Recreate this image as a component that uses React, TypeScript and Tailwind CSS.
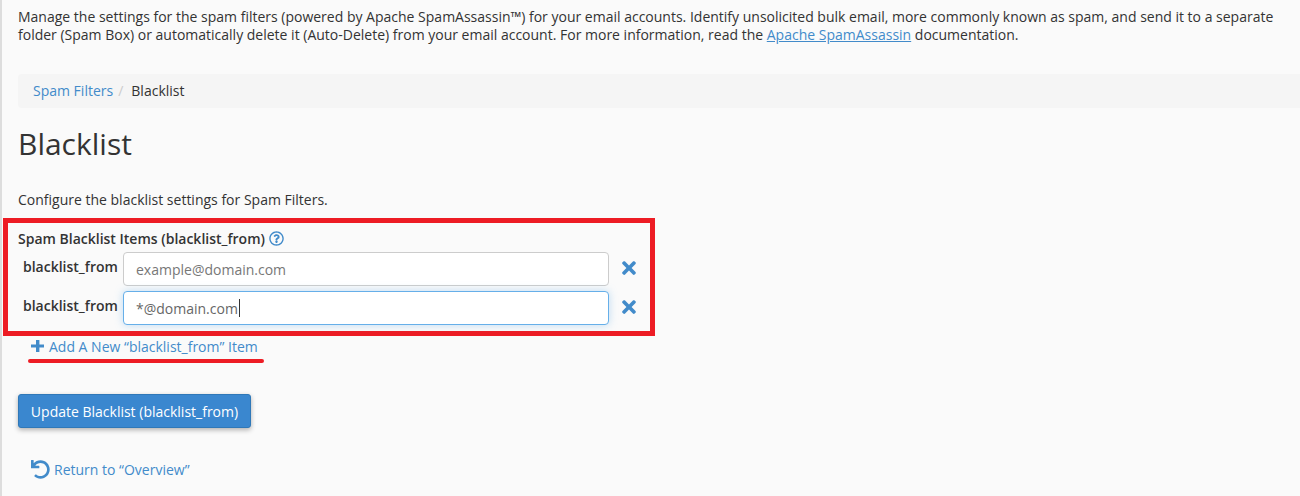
import { FaTimes, FaUndo, FaRegQuestionCircle } from "react-icons/fa";

export default function App() {
  return (
    <div className="h-[496px] w-[1300px] overflow-hidden bg-[#fafafa] font-['Open_Sans',sans-serif] text-[14px] text-[#333333] flex">
      <div className="w-[2px] shrink-0 bg-[#dddddd]" />
      <div className="flex-1 min-w-0 flex flex-col">
        <p className="ml-[16px] mt-[8px] leading-[18px] w-[1270px]">
          Manage the settings for the spam filters (powered by Apache SpamAssassin™) for your email accounts. Identify unsolicited bulk email, more commonly known as spam, and send it to a separate folder (Spam Box) or automatically delete it (Auto-Delete) from your email account. For more information, read the{" "}
          <a className="text-[#428bca] underline">Apache SpamAssassin</a> documentation.
        </p>
        <nav className="ml-[16px] mt-[30px] h-[34px] rounded-l-[4px] bg-[#f5f5f5] pl-[15px] pb-[2px] flex items-center">
          <a className="text-[#428bca]">Spam Filters</a>
          <span className="pl-[5px] pr-[8px] text-[#cccccc]">/</span>
          <span>Blacklist</span>
        </nav>
        <h1 className="ml-[16px] mt-[15px] text-[30px] leading-[42px] font-normal">Blacklist</h1>
        <p className="ml-[16px] mt-[25px] leading-[20px]">Configure the blacklist settings for Spam Filters.</p>
        <section className="ml-[1px] mt-[8px] w-[652px] h-[118px] border-[5px] border-[#ed1c24] pl-[10px] pt-[5px]">
          <div className="flex items-center gap-[4px] h-[20px] font-semibold">
            Spam Blacklist Items (blacklist_from)
            <FaRegQuestionCircle size={15} className="text-[#428bca]" />
          </div>
          <div className="mt-[4px] flex flex-col gap-[5px]">
            <Row value="example@domain.com" />
            <Row value="*@domain.com" focused />
          </div>
        </section>
        <a className="ml-[29px] h-[20px] flex items-center gap-[5px] text-[#428bca]">
          <svg width="13" height="12" viewBox="0 0 13 12" fill="currentColor">
            <path d="M5 0h3.4v4.4H13v3.2H8.4V12H5V7.6H0V4.4h5z" />
          </svg>
          Add A New “blacklist_from” Item
        </a>
        <div className="ml-[26px] mt-[3px] w-[236px] h-[4px] rounded-full bg-[#ed1c24]" />
        <button className="ml-[16px] mt-[31px] w-[233px] h-[34px] rounded-[3px] border border-[#2f78b8] bg-[#3a87cf] text-white font-medium shadow-[0_2px_5px_rgba(0,0,0,0.3)]">
          Update Blacklist (blacklist_from)
        </button>
        <a className="ml-[29px] mt-[29px] h-[24px] flex items-center gap-[4px] text-[#428bca]">
          <FaUndo size={19} />
          Return to “Overview”
        </a>
      </div>
    </div>
  );
}

function Row({ value, focused }: { value: string; focused?: boolean }) {
  return (
    <div className="flex h-[34px]">
      <label className="w-[105px] pl-[5px] pt-[5px] font-semibold leading-[20px]">blacklist_from</label>
      <div
        className={
          focused
            ? "w-[486px] h-[34px] rounded-[4px] border border-[#66afe9] bg-white pl-[12px] flex items-center text-[#666666] shadow-[0_0_8px_rgba(102,175,233,0.4)]"
            : "w-[486px] h-[34px] rounded-[4px] border border-[#cccccc] bg-white pl-[12px] flex items-center text-[#777777]"
        }
      >
        {value}
        {focused && <span className="ml-[1px] h-[18px] w-px bg-[#333333]" />}
      </div>
      <div className="ml-[10px] pb-[3px] flex items-center text-[#428bca]">
        <FaTimes size={20} />
      </div>
    </div>
  );
}
